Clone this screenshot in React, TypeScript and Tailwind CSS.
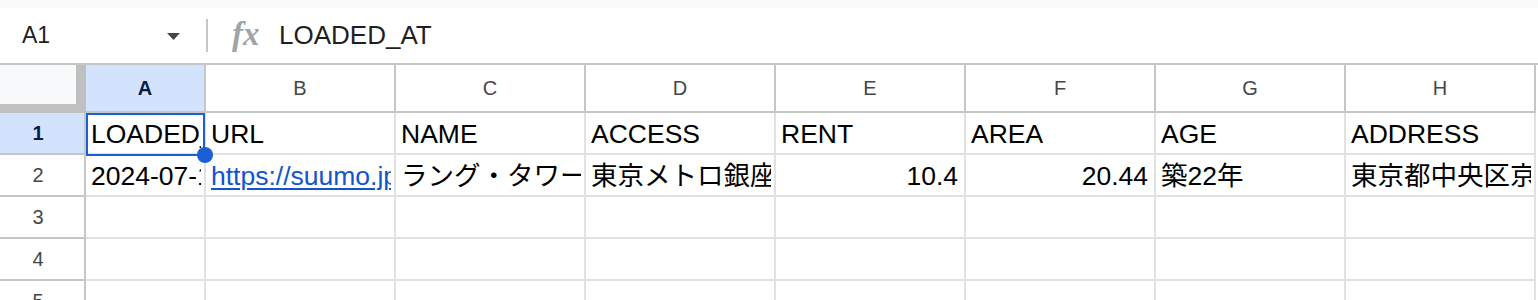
import React from "react";

const cols = ["A", "B", "C", "D", "E", "F", "G", "H"];

type CellData = { text?: string; align?: "left" | "right"; link?: boolean };

const rows: CellData[][] = [
  [
    { text: "LOADED_AT" },
    { text: "URL" },
    { text: "NAME" },
    { text: "ACCESS" },
    { text: "RENT" },
    { text: "AREA" },
    { text: "AGE" },
    { text: "ADDRESS" },
  ],
  [
    { text: "2024-07-15 10:00:00" },
    { text: "https://suumo.jp/chintai/", link: true },
    { text: "ラング・タワー京橋" },
    { text: "東京メトロ銀座線/京橋駅 歩1分" },
    { text: "10.4", align: "right" },
    { text: "20.44", align: "right" },
    { text: "築22年" },
    { text: "東京都中央区京橋２" },
  ],
  [],
  [],
  [],
];

const cellFont = {
  fontFamily: '"Liberation Sans", Arial, "Noto Sans CJK JP", sans-serif',
};

const headFont = { fontFamily: '"Liberation Sans", Arial, sans-serif' };

const Cell = ({ data }: { data?: CellData }) => {
  const right = data?.align === "right";
  return (
    <div
      className={`border-r-2 border-b-2 border-[#e1e1e1] overflow-hidden whitespace-nowrap flex items-end pb-[4px] text-[26.5px] leading-[30px] text-black ${
        right ? "justify-end pr-[6px]" : "pl-[5px] pr-[3px]"
      }`}
      style={cellFont}
    >
      {data?.link ? (
        <span className="block overflow-hidden text-[#1155cc] underline decoration-[2px] underline-offset-[3px]">
          {data.text}
        </span>
      ) : (
        <span className="block overflow-hidden">{data?.text}</span>
      )}
    </div>
  );
};

export default function App() {
  return (
    <div className="w-[1538px] h-[300px] overflow-hidden bg-white">
      <div className="h-[8px] bg-[#f9fbfd]" />

      {/* formula bar */}
      <div className="h-[57px] flex items-center border-b-2 border-[#c4c7c5] bg-white" style={headFont}>
        <div className="w-[206px] flex items-center pl-[22px] pr-[26px] justify-between">
          <span className="text-[23px] text-[#1f1f1f]">A1</span>
          <svg width="13" height="7" viewBox="0 0 13 7" className="mt-[1px]">
            <path d="M0 0h13L6.5 7z" fill="#444746" />
          </svg>
        </div>
        <div className="w-[2px] h-[33px] bg-[#c4c7c5]" />
        <span
          className="ml-[24px] w-[47px] text-[33px] italic font-semibold text-[#a0a4a8] leading-none -mt-[2px]"
          style={{ fontFamily: '"Liberation Serif", "Times New Roman", serif' }}
        >
          fx
        </span>
        <span className="text-[26px] text-[#1f1f1f]">LOADED_AT</span>
      </div>

      {/* grid */}
      <div className="relative grid grid-cols-[86px_120px_repeat(7,190px)] grid-rows-[48px_repeat(5,42px)]">
        {/* corner */}
        <div className="bg-[#c0c0c0]">
          <div className="w-[76px] h-[39px] bg-[#f8f9fa]" />
        </div>
        {cols.map((c, i) => (
          <div
            key={c}
            className={`border-r-2 border-b-2 border-[#c4c7c5] flex items-center justify-center text-[20px] ${
              i === 0 ? "bg-[#d3e3fd] text-[#041e49] font-bold" : "bg-white text-[#444746]"
            }`}
            style={headFont}
          >
            {c}
          </div>
        ))}

        {rows.map((row, r) => (
          <React.Fragment key={r}>
            <div
              className={`border-r-2 border-b-2 border-[#c4c7c5] flex items-center justify-center pr-[8px] text-[20px] ${
                r === 0 ? "bg-[#d3e3fd] text-[#041e49] font-bold" : "bg-white text-[#444746]"
              }`}
              style={headFont}
            >
              {r + 1}
            </div>
            {cols.map((c, i) => (
              <Cell key={c} data={row[i]} />
            ))}
          </React.Fragment>
        ))}

        {/* selection on A1 */}
        <div className="absolute left-[86px] top-[48px] w-[119px] h-[43px] border-[2px] border-[#1a5fd6] pointer-events-none" />
        <div className="absolute left-[197px] top-[82px] w-[16px] h-[16px] rounded-full bg-[#1a5fd6]" />
      </div>
    </div>
  );
}
